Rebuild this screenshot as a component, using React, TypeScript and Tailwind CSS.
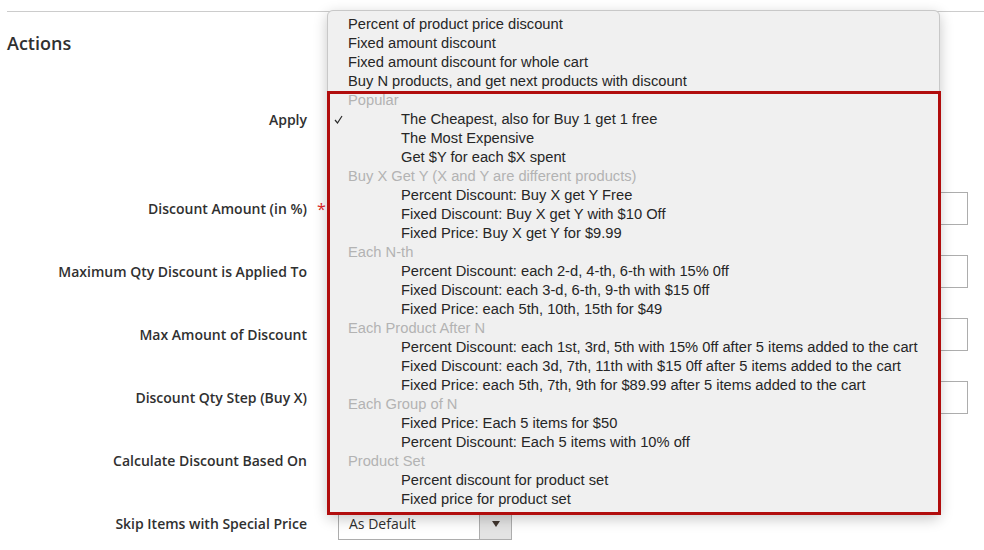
import React from 'react';

type Option = { label: string; group?: boolean; child?: boolean; checked?: boolean };

const options: Option[] = [
    { label: 'Percent of product price discount' },
    { label: 'Fixed amount discount' },
    { label: 'Fixed amount discount for whole cart' },
    { label: 'Buy N products, and get next products with discount' },
    { label: 'Popular', group: true },
    { label: 'The Cheapest, also for Buy 1 get 1 free', child: true, checked: true },
    { label: 'The Most Expensive', child: true },
    { label: 'Get $Y for each $X spent', child: true },
    { label: 'Buy X Get Y (X and Y are different products)', group: true },
    { label: 'Percent Discount: Buy X get Y Free', child: true },
    { label: 'Fixed Discount: Buy X get Y with $10 Off', child: true },
    { label: 'Fixed Price: Buy X get Y for $9.99', child: true },
    { label: 'Each N-th', group: true },
    { label: 'Percent Discount: each 2-d, 4-th, 6-th with 15% 0ff', child: true },
    { label: 'Fixed Discount: each 3-d, 6-th, 9-th with $15 0ff', child: true },
    { label: 'Fixed Price: each 5th, 10th, 15th for $49', child: true },
    { label: 'Each Product After N', group: true },
    { label: 'Percent Discount: each 1st, 3rd, 5th with 15% 0ff after 5 items added to the cart', child: true },
    { label: 'Fixed Discount: each 3d, 7th, 11th with $15 0ff after 5 items added to the cart', child: true },
    { label: 'Fixed Price: each 5th, 7th, 9th for $89.99 after 5 items added to the cart', child: true },
    { label: 'Each Group of N', group: true },
    { label: 'Fixed Price: Each 5 items for $50', child: true },
    { label: 'Percent Discount: Each 5 items with 10% off', child: true },
    { label: 'Product Set', group: true },
    { label: 'Percent discount for product set', child: true },
    { label: 'Fixed price for product set', child: true },
];

function FieldRow({ label, required, children, className }: { label: string; required?: boolean; children: React.ReactNode; className?: string }) {
    return (
        <div className={`flex items-center h-[33px] ${className ?? ''}`}>
            <div className="w-[307px] shrink-0 text-right text-[14px] font-semibold text-[#303030]">{label}</div>
            <div className="w-[31px] shrink-0 pl-[10px] text-[#e22626] text-[16px] leading-none">{required ? '*' : ''}</div>
            {children}
        </div>
    );
}

function TextInput() {
    return <div className="w-[630px] h-[33px] border border-[#adadad] bg-white" />;
}

function SelectBox({ value, width }: { value: string; width: string }) {
    return (
        <div className={`${width} h-[33px] border border-[#adadad] bg-white flex items-stretch`}>
            <div className="flex-1 flex items-center pl-[10px] text-[14px] text-[#303030]">{value}</div>
            <div className="w-[32px] border-l border-[#adadad] bg-[#e3e3e3] flex items-center justify-center">
                <svg width="8" height="6" viewBox="0 0 8 6"><path d="M0 0h8L4 6z" fill="#41362f" /></svg>
            </div>
        </div>
    );
}

export default function App() {
    return (
        <div className="relative w-[984px] h-[550px] overflow-hidden bg-white" style={{ fontFamily: '"Open Sans", sans-serif' }}>
            <div className="pt-[11px] pl-[7px]">
                <div className="border-t border-[#cccccc]" />
                <h2 className="mt-[18px] text-[18px] leading-[26px] font-semibold text-[#303030]">Actions</h2>
            </div>

            <div className="flex flex-col mt-[47px]">
                <FieldRow label="Apply">
                    <SelectBox value="" width="w-[590px]" />
                </FieldRow>
                <FieldRow label="Discount Amount (in %)" required className="mt-[56px]">
                    <TextInput />
                </FieldRow>
                <FieldRow label="Maximum Qty Discount is Applied To" className="mt-[30px]">
                    <TextInput />
                </FieldRow>
                <FieldRow label="Max Amount of Discount" className="mt-[30px]">
                    <TextInput />
                </FieldRow>
                <FieldRow label="Discount Qty Step (Buy X)" className="mt-[30px]">
                    <TextInput />
                </FieldRow>
                <FieldRow label="Calculate Discount Based On" className="mt-[30px]">
                    <SelectBox value="" width="w-[174px]" />
                </FieldRow>
                <FieldRow label="Skip Items with Special Price" className="mt-[30px]">
                    <SelectBox value="As Default" width="w-[174px]" />
                </FieldRow>
            </div>

            {/* native select popup */}
            <div
                className="absolute left-[327px] top-[10px] w-[613px] h-[505px] rounded-[6px] border border-[#c8c8c8] bg-[#f0f0f0] shadow-[0_4px_14px_rgba(0,0,0,0.22)] pt-[4px] text-[14.7px] leading-[19px] text-[#262626]"
                style={{ fontFamily: '"Liberation Sans", Arial, sans-serif' }}
            >
                {options.map((o, i) => (
                    <div key={i} className="relative h-[19px] whitespace-nowrap">
                        {o.checked && (
                            <svg className="absolute left-[6px] top-[5px]" width="9" height="9" viewBox="0 0 9 9">
                                <path d="M1 5l2.5 3L8 1" fill="none" stroke="#2b2b2b" strokeWidth="1.2" />
                            </svg>
                        )}
                        <span className={o.group ? 'pl-[20px] text-[#b3b3b3]' : o.child ? 'pl-[73px]' : 'pl-[20px]'}>{o.label}</span>
                    </div>
                ))}
            </div>

            {/* highlight frame */}
            <div className="absolute left-[327px] top-[91px] w-[614px] h-[424px] border-[3px] border-[#b10d0d]" />
        </div>
    );
}
